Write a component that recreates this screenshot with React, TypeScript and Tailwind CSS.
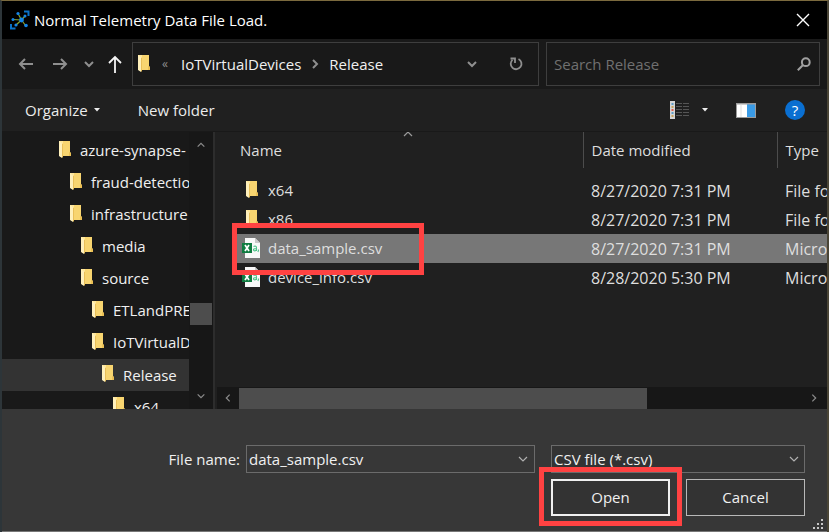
import type { ReactNode } from "react";

const chevronPaths = {
  up: "M2 8 L6 4 L10 8",
  down: "M2 4 L6 8 L10 4",
  left: "M8 2 L4 6 L8 10",
  right: "M4 2 L8 6 L4 10",
};

function Chevron({
  dir,
  className = "size-3",
  stroke = 1.5,
}: {
  dir: keyof typeof chevronPaths;
  className?: string;
  stroke?: number;
}) {
  return (
    <svg viewBox="0 0 12 12" className={className} fill="none" stroke="currentColor" strokeWidth={stroke} aria-hidden="true">
      <path d={chevronPaths[dir]} />
    </svg>
  );
}

function FolderIcon() {
  return (
    <svg viewBox="0 0 13 19" className="mb-0.5 h-[19px] w-[13px] shrink-0" aria-hidden="true">
      <path d="M1 1h11v11l1 1v3H3z" fill="#f8d570" />
      <path d="M11 12l2 1v3h-2z" fill="#eabf55" />
      <path d="M1 1h4v16H3L1 15z" fill="#ffe79b" />
      <path d="M1 1l3 2.500V18l-3-2z" fill="#fff0bb" />
      <path d="M4 3.500V18l1-1V4z" fill="#e9bf58" />
    </svg>
  );
}

function CsvIcon() {
  return (
    <svg viewBox="0 0 18 20" className="mb-0.5 h-5 w-[18px] shrink-0" aria-hidden="true">
      <path d="M3 0h10l5 5v15H3z" fill="#f8f8f8" />
      <path d="M13 0l5 5h-5z" fill="#c9c9c9" />
      <path d="M0 5h10v10H0z" fill="#107c41" />
      <path d="M3 7l4 6M7 7l-4 6" stroke="#fff" strokeWidth="1.700" />
      <path d="M11.500 8.500c2-1 3 0 3 1.200V13M14.500 10.500c-2 0-3 .4-3 1.300 0 1.500 2.400 1.400 3 0M16.500 11.500v1l-.6 1.500" fill="none" stroke="#4fc48a" strokeWidth="1.100" />
    </svg>
  );
}

function AppIcon() {
  return (
    <svg viewBox="0 0 20 20" className="size-5 shrink-0" aria-hidden="true">
      <g fill="none" stroke="#0a72c8" strokeWidth="2">
        <path d="M14 1.500h4.500V6M1 14v4.500h4.500" />
      </g>
      <path d="M11.500 10L8 3.500M11.500 10L3 9.500M11.500 10L6 15M11.500 10L15.500 15.500M11.500 10L15 6" stroke="#8aa52c" strokeWidth="1.200" />
      <g fill="#1585e8">
        <circle cx="11.500" cy="10" r="2.400" />
        <circle cx="8" cy="3.500" r="1.600" />
        <circle cx="3" cy="9.500" r="1.500" />
        <circle cx="6" cy="15" r="1.600" />
        <circle cx="16" cy="15.500" r="1.800" />
        <circle cx="15" cy="6" r="1.500" />
      </g>
    </svg>
  );
}

function IconButton({ label, className, children }: { label: string; className?: string; children: ReactNode }) {
  return (
    <button type="button" aria-label={label} className={`flex shrink-0 items-center justify-center ${className ?? ""}`}>
      {children}
    </button>
  );
}

const tree = [
  { name: "azure-synapse-", indent: "pl-14" },
  { name: "fraud-detection", indent: "pl-[67px]" },
  { name: "infrastructure", indent: "pl-[67px]" },
  { name: "media", indent: "pl-[78px]" },
  { name: "source", indent: "pl-[78px]" },
  { name: "ETLandPRE", indent: "pl-[89px]" },
  { name: "IoTVirtualDevices", indent: "pl-[89px]" },
  { name: "Release", indent: "pl-[99px]", selected: true },
  { name: "x64", indent: "pl-[110px]" },
];

const files = [
  { name: "x64", date: "8/27/2020 7:31 PM", type: "File folder", folder: true },
  { name: "x86", date: "8/27/2020 7:31 PM", type: "File folder", folder: true },
  { name: "data_sample.csv", date: "8/27/2020 7:31 PM", type: "Microsoft Excel", selected: true },
  { name: "device_info.csv", date: "8/28/2020 5:30 PM", type: "Microsoft Excel" },
];

function TitleBar() {
  return (
    <header className="flex h-[38px] shrink-0 items-center bg-black pr-4 pl-2">
      <AppIcon />
      <h1 className="ml-1 flex-1 text-white">Normal Telemetry Data File Load.</h1>
      <IconButton label="Close" className="size-4 text-white">
        <svg viewBox="0 0 14 14" className="size-3.5" stroke="currentColor" strokeWidth="1.400" aria-hidden="true">
          <path d="M1 1l12 12M13 1L1 13" />
        </svg>
      </IconButton>
    </header>
  );
}

function NavBar() {
  return (
    <nav className="flex h-[50px] shrink-0 items-center bg-[#191919] pr-[7px]">
      <IconButton label="Back" className="ml-4 w-4 text-[#8f8f8f]">
        <svg viewBox="0 0 16 14" className="h-3.5 w-4" fill="none" stroke="currentColor" strokeWidth="2" aria-hidden="true">
          <path d="M15 7H2M7 2L2 7l5 5" />
        </svg>
      </IconButton>
      <IconButton label="Forward" className="ml-[18px] w-4 text-[#8f8f8f]">
        <svg viewBox="0 0 16 14" className="h-3.5 w-4" fill="none" stroke="currentColor" strokeWidth="2" aria-hidden="true">
          <path d="M1 7h13M9 2l5 5-5 5" />
        </svg>
      </IconButton>
      <IconButton label="Recent locations" className="ml-[15px] w-3 text-[#8f8f8f]">
        <Chevron dir="down" stroke={2} />
      </IconButton>
      <IconButton label="Up" className="ml-3 w-4 text-[#f5f5f5]">
        <svg viewBox="0 0 16 18" className="h-[18px] w-4" fill="none" stroke="currentColor" strokeWidth="1.800" aria-hidden="true">
          <path d="M8 18V2M2 8l6-6 6 6" />
        </svg>
      </IconButton>
      <div className="ml-[9px] flex h-11 min-w-0 flex-1 items-center border border-[#3e3e3e] pl-1">
        <FolderIcon />
        <span className="ml-3 w-4 text-xs text-[#8f8f8f]">«</span>
        <button type="button" className="ml-[3px] text-[#f0f0f0]">IoTVirtualDevices</button>
        <Chevron dir="right" stroke={2} className="mx-2 size-3 text-[#8f8f8f]" />
        <button type="button" className="text-[#f0f0f0]">Release</button>
        <IconButton label="Previous locations" className="ml-auto w-3 text-[#8f8f8f]">
          <Chevron dir="down" stroke={2} />
        </IconButton>
        <IconButton label="Refresh" className="mr-3.5 ml-[30px] w-4 text-[#8f8f8f]">
          <svg viewBox="0 0 16 16" className="size-4" fill="none" stroke="currentColor" strokeWidth="1.800" aria-hidden="true">
            <path d="M10.500 3A5.400 5.400 0 1 1 4.500 3.800M2.500 2.500H7V7" />
          </svg>
        </IconButton>
      </div>
      <div className="ml-[7px] flex h-11 w-[274px] items-center border border-[#3e3e3e] pr-2 pl-[7px]">
        <input
          type="search"
          aria-label="Search Release"
          placeholder="Search Release"
          className="min-w-0 flex-1 bg-transparent outline-none placeholder:text-[#707070]"
        />
        <svg viewBox="0 0 14 14" className="size-3.5 text-[#a0a0a0]" fill="none" stroke="currentColor" strokeWidth="2" aria-hidden="true">
          <circle cx="8.800" cy="5.200" r="3.900" />
          <path d="M6 8L.8 13.200" />
        </svg>
      </div>
    </nav>
  );
}

function Toolbar() {
  return (
    <div className="flex h-[43px] shrink-0 items-center border-b border-[#191919] bg-[#202020] pr-[22px] pl-[23px] text-[#ececec]">
      <button type="button" className="flex items-center gap-1.5">
        Organize
        <svg viewBox="0 0 6 4" className="h-1 w-1.5" fill="currentColor" aria-hidden="true">
          <path d="M0 0h6L3 3.500z" />
        </svg>
      </button>
      <button type="button" className="ml-[38px]">New folder</button>
      <IconButton label="Change your view" className="ml-auto">
        <svg viewBox="0 0 20 18" className="h-[18px] w-5" aria-hidden="true">
          <path d="M0 0h5v18H0z" fill="#d5d5d5" />
          <path d="M1.500 2h2v2h-2zM1.500 11h2v2h-2z" fill="#5e9dc8" />
          <path d="M1.500 5h2v2h-2zM1.500 14h2v2h-2z" fill="#c9a45d" />
          <path d="M1.500 8h2v2h-2z" fill="#e05b4b" />
          <path d="M6 2.500h6M13 2.500h6M6 5.500h6M13 5.500h6M6 8.500h6M13 8.500h6M6 11.500h6M13 11.500h6M6 14.500h6M13 14.500h6" stroke="#555" />
        </svg>
      </IconButton>
      <IconButton label="More options" className="ml-3 w-1.5">
        <svg viewBox="0 0 6 4" className="h-1 w-1.5" fill="currentColor" aria-hidden="true">
          <path d="M0 0h6L3 3.500z" />
        </svg>
      </IconButton>
      <IconButton label="Preview pane" className="ml-7">
        <svg viewBox="0 0 20 15" className="h-[15px] w-5" aria-hidden="true">
          <path d="M0 0h20v15H0z" fill="#9b9b9b" />
          <path d="M1 1.500h10v12.500H1z" fill="#fff" />
          <path d="M5 1.500v12.500" stroke="#ddd" />
          <path d="M11 1.500h8v12.500h-8z" fill="#3a9be6" />
        </svg>
      </IconButton>
      <IconButton label="Help" className="ml-[29px] size-5 rounded-full bg-[#0a6fd1] text-white">?</IconButton>
    </div>
  );
}

function FolderTree() {
  return (
    <aside className="flex w-[211px] shrink-0 overflow-hidden bg-[#191919]">
      <ul className="grid h-[291px] w-[187px] grid-rows-9 pt-0.5 text-[#f0f0f0]">
        {tree.map((item) => (
          <li key={item.name + item.indent} className={`min-w-0 overflow-hidden ${item.selected ? "bg-[#333]" : ""}`}>
            <button type="button" className={`flex h-full items-center gap-[9px] whitespace-nowrap ${item.indent}`}>
              <FolderIcon />
              {item.name}
            </button>
          </li>
        ))}
      </ul>
      <div className="flex w-6 flex-col items-center bg-[#171717] py-2 text-[#8a8a8a]">
        <Chevron dir="up" className="size-2.5" />
        <div className="mt-[153px] h-[22px] w-[22px] bg-[#4d4d4d]" />
        <Chevron dir="down" className="mt-auto size-2.5" />
      </div>
    </aside>
  );
}

function FileList() {
  return (
    <section className="flex min-w-0 flex-1 flex-col overflow-hidden border-l-2 border-[#2d2d2d] bg-[#202020]">
      <div className="min-h-0 flex-1 pl-[22px]">
        <table className="w-full table-fixed border-collapse text-left whitespace-nowrap text-[#dedede]">
          <colgroup>
            <col className="w-[346px]" />
            <col className="w-[194px]" />
            <col />
          </colgroup>
          <thead>
            <tr className="h-9">
              <th className="relative border-r border-[#4c4c4c] pl-[3px] font-normal">
                Name
                <Chevron dir="up" stroke={1.2} className="absolute -top-1 left-1/2 -ml-2 size-3 text-[#9a9a9a]" />
              </th>
              <th className="border-r border-[#4c4c4c] pl-2 font-normal">Date modified</th>
              <th className="pl-2 font-normal">Type</th>
            </tr>
          </thead>
          <tbody className="before:block before:h-2">
            {files.map((file) => (
              <tr key={file.name} className={`h-[29px] ${file.selected ? "bg-[#777]" : ""}`}>
                <td className="relative p-0">
                  <div className="flex items-center pl-[5px]">
                    <span className={`flex w-[26px] ${file.folder ? "pl-[3px]" : ""}`}>{file.folder ? <FolderIcon /> : <CsvIcon />}</span>
                    {file.name}
                  </div>
                  {file.selected && <div className="absolute -top-[11px] -left-[5px] z-10 h-[52px] w-48 border-5 border-[#ff4242]" />}
                </td>
                <td className="p-0 pl-2 text-base">{file.date}</td>
                <td className="overflow-hidden p-0 pl-2 text-base">{file.type}</td>
              </tr>
            ))}
          </tbody>
        </table>
      </div>
      <div className="ml-0.5 flex h-[22px] shrink-0 items-center bg-[#171717] pr-2 text-[#8a8a8a]">
        <div className="flex w-[22px] justify-center">
          <Chevron dir="left" className="size-2.5" />
        </div>
        <div className="h-[21px] w-[408px] bg-[#4d4d4d]" />
        <Chevron dir="right" className="ml-auto size-2.5" />
      </div>
    </section>
  );
}

function Footer() {
  return (
    <footer className="relative flex flex-1 gap-4 border-b border-[#777] bg-[#373737] pt-9 pr-[22px] text-[#f0f0f0]">
      <div className="flex h-7 flex-1 items-center justify-end gap-1.5">
        <label htmlFor="file-name">File name:</label>
        <div className="flex h-7 w-[289px] items-center border border-[#6b6b6b] pr-[5px] pl-0.5">
          <input id="file-name" type="text" defaultValue="data_sample.csv" className="min-w-0 flex-1 bg-transparent outline-none" />
          <Chevron dir="down" stroke={1.2} className="size-3 text-[#b0b0b0]" />
        </div>
      </div>
      <div className="flex w-[254px] flex-col gap-1.5">
        <div className="grid h-7 items-center">
          <select aria-label="File type" className="col-start-1 row-start-1 h-7 appearance-none border border-[#6b6b6b] bg-[#333] pl-0.5 outline-none">
            <option>CSV file (*.csv)</option>
          </select>
          <Chevron dir="down" stroke={1.2} className="pointer-events-none col-start-1 row-start-1 mr-[5px] size-3 justify-self-end text-[#b0b0b0]" />
        </div>
        <div className="grid grid-cols-2 gap-4">
          <div className="relative flex">
            <button type="button" className="h-[37px] flex-1 border-2 border-[#f0f0f0] bg-[#333]">Open</button>
            <div className="pointer-events-none absolute -inset-x-3 -top-3 -bottom-2.5 border-5 border-[#ff4242]" />
          </div>
          <button type="button" className="h-[37px] border border-[#b8b8b8] bg-[#333]">Cancel</button>
        </div>
      </div>
      <svg viewBox="0 0 10 10" className="absolute right-1 bottom-0.5 size-2.5" fill="#c8c8c8" aria-hidden="true">
        <path d="M8 0h2v2H8zM4 4h2v2H4zM8 4h2v2H8zM0 8h2v2H0zM4 8h2v2H4zM8 8h2v2H8z" />
      </svg>
    </footer>
  );
}

export default function App() {
  return (
    <main className="flex min-h-screen flex-col border-t border-r-2 border-l-2 border-t-[#7b6a3e] border-r-[#4a4536] border-l-[#2d3539] bg-[#373737] font-['Open_Sans','Noto_Sans',sans-serif] text-[15px]">
      <TitleBar />
      <NavBar />
      <Toolbar />
      <div className="flex h-[277px] shrink-0">
        <FolderTree />
        <FileList />
      </div>
      <Footer />
    </main>
  );
}
